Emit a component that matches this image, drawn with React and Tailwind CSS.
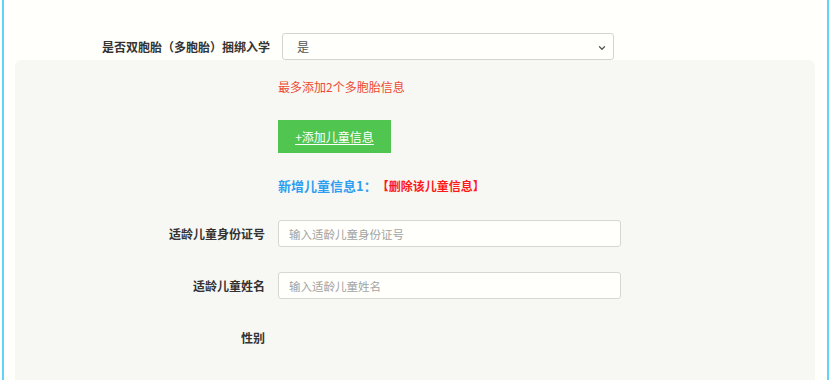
import { ChevronDown } from "lucide-react";

const font = { fontFamily: '"Noto Sans CJK SC", "Liberation Sans", sans-serif' };

function Field({ label, placeholder }) {
  return (
    <div className="flex items-center h-[27px]">
      <label className="w-[250px] shrink-0 text-right text-[12px] font-bold text-[#333]">
        {label}
      </label>
      <input
        className="ml-[13px] w-[343px] h-[27px] rounded-[3px] border border-[#d6d6d2] bg-[#fffffb] px-[10px] text-[11.5px] text-[#333] placeholder:text-[#a3a3a3] outline-none"
        placeholder={placeholder}
      />
    </div>
  );
}

export default function App() {
  return (
    <div style={font} className="w-[831px] h-[380px] bg-white overflow-hidden">
      <div className="ml-[2px] w-[827px] h-[380px] border-x-2 border-[#62d2f5] bg-[#fffffb]">
        <div className="pt-[33px] flex items-center h-[60px]">
          <label className="w-[266px] shrink-0 text-right text-[12px] font-bold text-[#333]">
            是否双胞胎（多胞胎）捆绑入学
          </label>
          <div className="relative ml-[12px] w-[332px] h-[27px] rounded-[3px] border border-[#d4d4d0] bg-[#fffffb] flex items-center px-[14px] text-[12px] text-[#555]">
            是
            <ChevronDown className="absolute right-[6px] top-[9px] w-[10px] h-[10px] text-[#555]" strokeWidth={3} />
          </div>
        </div>

        <div className="ml-[11px] w-[800px] h-[320px] rounded-t-[6px] bg-[#f7f7f4]">
          <div className="pl-[263px] pt-[18px] text-[12px] text-[#ee4a33] leading-[18px]">
            最多添加2个多胞胎信息
          </div>
          <div className="pl-[263px] mt-[24px]">
            <button className="block w-[113px] h-[33px] bg-[#50c54f] text-white text-[12px] underline underline-offset-2">
              +添加儿童信息
            </button>
          </div>
          <div className="pl-[263px] mt-[23px] flex items-center h-[20px]">
            <span className="text-[13px] font-bold text-[#2e9ff0]">新增儿童信息1：</span>
            <span className="text-[12px] font-bold text-[#ff1a1a]">【删除该儿童信息】</span>
          </div>
          <div className="mt-[24px] flex flex-col gap-[25px]">
            <Field label="适龄儿童身份证号" placeholder="输入适龄儿童身份证号" />
            <Field label="适龄儿童姓名" placeholder="输入适龄儿童姓名" />
            <div className="flex items-center h-[27px]">
              <label className="w-[250px] shrink-0 text-right text-[12px] font-bold text-[#333]">
                性别
              </label>
            </div>
          </div>
        </div>
      </div>
    </div>
  );
}
